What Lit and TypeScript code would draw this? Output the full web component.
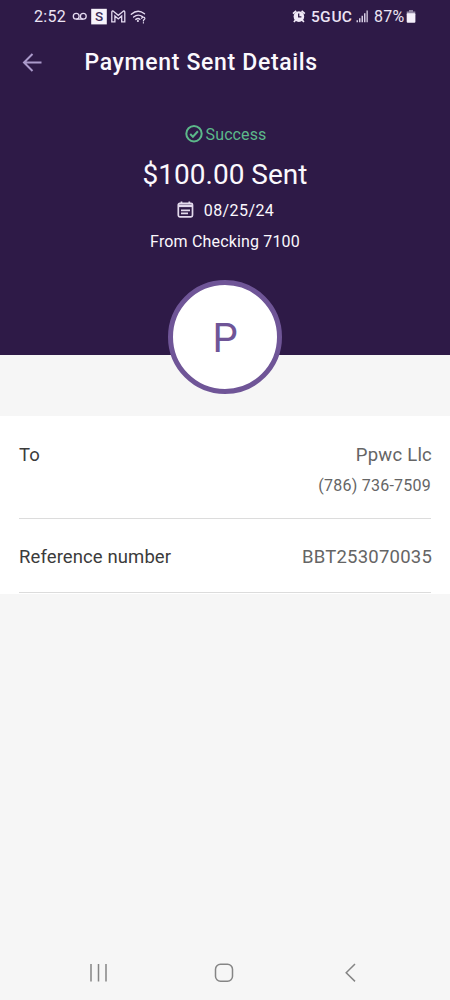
import { LitElement, html, css } from "lit";
import { customElement, property } from "lit/decorators.js";

@customElement("status-bar")
class StatusBar extends LitElement {
  static styles = css`
    :host { display: flex; height: 34px; padding: 0 34px; align-items: center;
      justify-content: space-between; color: #ece4f4; font-size: 16px; line-height: 34px; }
    .group { display: flex; align-items: center; height: 34px; }
    .clock { width: 38px; letter-spacing: 0.3px; }
    .net { width: 45px; margin-left: 5px; font-weight: 500; font-size: 15.5px; word-spacing: -3px; letter-spacing: 0.1px; }
    .pct { margin-left: 6px; width: 32px; letter-spacing: 0.2px; }
    svg { display: block; flex: none; }
  `;
  render() {
    return html`
      <div class="group">
        <span class="clock">2:52</span>
        <svg width="76" height="34" viewBox="72 0 76 34" fill="none" stroke="#e4daf0" stroke-width="1.3">
          <circle cx="76.2" cy="16.2" r="2.9"/><circle cx="83.3" cy="16.2" r="2.9"/><path d="M76.2 19.1h7.1"/>
          <rect x="91.2" y="8.8" width="15.6" height="15.6" fill="#f7f3fb" stroke="none"/>
          <text x="99" y="21.4" text-anchor="middle" font-size="13.5" font-weight="500" fill="#3c2c57" stroke="none">S</text>
          <path stroke-width="1.3" d="M111.8 21.8V12.3q0-1.8 1.6-1.1l4.900 4.100 4.900-4.100q1.600-.7 1.600 1.100v9.500h-3.100v-5.800l-3.400 3-3.400-3v5.800z"/>
          <g stroke-linecap="round" stroke-width="1.4"><path d="M131.3 14.2q6.6-5.6 13.2-.4M133.6 17q4.5-3.6 8.8-.4M135.8 19.4q2.2-1.7 4.1-.2"/>
          <path stroke-width="1.2" d="M141.7 18.3q.2-1.2 1.6-1.2 1.6 0 1.6 1.4c0 1.1-1.5 1.1-1.5 2.4M143.4 22.7v.2"/></g>
          <circle cx="137.9" cy="21" r="1.1" fill="#e4daf0" stroke="none"/>
        </svg>
      </div>
      <div class="group">
        <svg width="14" height="34" viewBox="292 0 14 34" fill="none" stroke="#f1eaf8">
          <circle cx="298.900" cy="16.600" r="5.300" fill="#f1eaf8" stroke="none"/>
          <path stroke-width="1.700" d="M293 13.700l3.200-2.900M304.800 13.700l-3.200-2.900M295.600 20l-1.700 2M302.200 20l1.700 2"/>
          <path stroke="#2e1a47" stroke-width="1.300" d="M298.700 13.500v3.400h2.700"/>
        </svg>
        <span class="net">5G UC</span>
        <svg width="12" height="34" viewBox="356 0 12 34" fill="#d5cbe2">
          <path d="M356.500 20.300h1.500v2h-1.500zM359 18.300h1.500v4h-1.500zM361.500 15.800h1.500v6.500h-1.500zM364 13.300h1.500v9h-1.500zM366.500 10.500h1.300v11.800h-1.300z"/>
        </svg>
        <span class="pct">87%</span>
        <svg width="10" height="34" viewBox="406 0 10 34">
          <path fill="#9287a4" d="M409 10h4v1.400h2.300v2.600h-8.600v-2.600h2.300z"/>
          <rect x="406.700" y="13.200" width="8.700" height="9.500" rx="1" fill="#f5effb"/>
        </svg>
      </div>`;
  }
}

@customElement("detail-row")
class DetailRow extends LitElement {
  @property() label = "";
  @property() value = "";
  @property() note = "";
  static styles = css`
    :host { display: flex; justify-content: space-between; margin: 0 19px; border-bottom: 1px solid #dcdcdc;
      font-size: 18.5px; line-height: 24px; box-sizing: border-box; }
    .label { color: #3b3b3b; letter-spacing: 0.1px; }
    .side { color: #656565; text-align: right; letter-spacing: 0.22px; margin-right: -1px; }
    .note { font-size: 16px; line-height: 24px; margin: 7px 1px 0 0; letter-spacing: 0.24px; }
  `;
  render() {
    return html`<div class="label">${this.label}</div>
      <div class="side"><div>${this.value}</div>${this.note ? html`<div class="note">${this.note}</div>` : ""}</div>`;
  }
}

@customElement("app-root")
class AppRoot extends LitElement {
  static styles = css`
    :host { display: flex; flex-direction: column; height: 1000px; background: #f6f6f6;
      font-family: Roboto, "Liberation Sans", sans-serif; overflow: hidden; }
    svg { display: block; flex: none; }
    .hero { height: 355px; flex: none; background: #2e1a47; color: #fbf8fd; display: flex; flex-direction: column; }
    status-bar { flex: none; }
    .bar { display: flex; flex: none; align-items: center; height: 56px; margin-top: 1px; padding-left: 21px; }
    .back { margin-bottom: 3px; }
    .title { margin: 0 0 0 41.5px; font-size: 23px; font-weight: 500; letter-spacing: 0.67px; line-height: 30px; }
    .summary { display: flex; flex: none; flex-direction: column; align-items: center; padding-top: 31px; }
    .status { display: flex; align-items: center; gap: 3px; height: 24px; color: #5cb88a; font-size: 16px; letter-spacing: 0.1px; padding-left: 1px; }
    .amount { font-size: 28px; line-height: 34px; margin-top: 12px; }
    .date { display: flex; align-items: center; gap: 10px; height: 24px; margin-top: 6px; padding-left: 1px; font-size: 16px; letter-spacing: 0.4px; }
    .from { font-size: 16px; line-height: 24px; margin-top: 8px; letter-spacing: 0.16px; }
    .avatar { width: 114px; height: 114px; box-sizing: border-box; border: 5px solid #6f5597; border-radius: 50%;
      background: #fff; color: #6f5597; margin: 26px auto 0; padding-top: 3px; flex: none; display: flex;
      align-items: center; justify-content: center; font-size: 40px; line-height: 40px; }
    .card { margin-top: 61px; height: 177.5px; flex: none; background: #fff; }
    .to { height: 103px; padding-top: 26.5px; }
    .ref { height: 74px; padding-top: 25.5px; }
    .nav { margin-top: auto; }
  `;
  render() {
    return html`
      <header class="hero">
        <status-bar></status-bar>
        <div class="bar">
          <svg class="back" width="22" height="22" viewBox="0 0 22 22" fill="none" stroke="#ab9acb" stroke-width="2"><path d="M20.500 11.500H3M11.500 3L3 11.500l8.500 8.500"/></svg>
          <h1 class="title">Payment Sent Details</h1>
        </div>
        <div class="summary">
          <div class="status">
            <svg width="18" height="18" viewBox="0 0 18 18" fill="none" stroke="#5cb88a" stroke-width="2"><circle cx="9" cy="8.700" r="7.700"/><path d="M5.200 9l2.700 2.700 5-5.400"/></svg>
            <span>Success</span>
          </div>
          <div class="amount">$100.00 Sent</div>
          <div class="date">
            <svg width="17" height="18" viewBox="0 0 17 18" fill="none" stroke="#e2d9ec" stroke-width="1.700"><rect x="1.300" y="2.300" width="14.200" height="13.500" rx="1.500"/><path d="M1.300 4.800h14.200" stroke-width="2.600"/><path d="M4.500 .5v2M12.300 .5v2M4 9.300h9M4 12.300h7"/></svg>
            <span>08/25/24</span>
          </div>
          <div class="from">From Checking 7100</div>
        </div>
        <div class="avatar">P</div>
      </header>
      <section class="card">
        <detail-row class="to" label="To" value="Ppwc Llc" note="(786) 736-7509"></detail-row>
        <detail-row class="ref" label="Reference number" value="BBT253070035"></detail-row>
      </section>
      <svg class="nav" width="450" height="54" viewBox="0 946 450 54" fill="none" stroke="#858585" stroke-width="1.500">
        <path d="M91 964v17.500M98.500 964v17.500M106 964v17.500"/>
        <rect x="215.500" y="964.200" width="17" height="17" rx="5"/>
        <path d="M355 964l-8.800 8.700 8.800 8.700"/>
      </svg>`;
  }
}
